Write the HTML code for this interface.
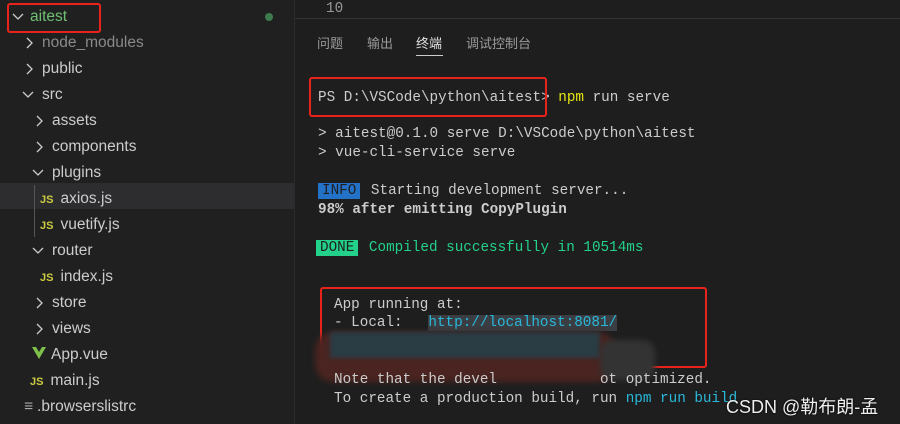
<!DOCTYPE html>
<html><head><style>
body{margin:0;width:900px;height:424px;background:#1e1e1e;overflow:hidden;position:relative;font-family:"Liberation Sans","Noto Sans CJK SC",sans-serif}
#side{position:absolute;left:0;top:0;width:294px;height:424px;background:#202020;border-right:1px solid #2b2b2b}
.r{position:absolute;height:26px;line-height:26px;font-size:15.5px;color:#ccc;white-space:nowrap}
.ch{display:inline-block;width:18px;height:26px;vertical-align:top}
.ch svg{margin-top:7px}
.js{color:#cbcb41;font-weight:bold;font-size:11px;margin-right:7px}
.m{font-family:"Liberation Mono",monospace;font-size:14.3px;color:#ccc;position:absolute;white-space:pre;line-height:19px}
.rb{position:absolute;border:2px solid #e8231c;border-radius:3px}
.bd{padding:0 4px;color:#1e1e1e;margin-right:2px}
</style></head><body>
<div id="side">
<div style="position:absolute;left:0;top:183px;width:294px;height:26px;background:#2d2d2f"></div>
<div style="position:absolute;left:34px;top:185px;width:1px;height:52px;background:#555"></div>
<div class="r" style="left:12px;top:4px;color:#6fbf73"><span class="ch"><svg width="12" height="12"><path d="M1 3l5 5 5-5" stroke="#ccc" fill="none" stroke-width="1.3"/></svg></span>aitest</div>
<div style="position:absolute;left:265px;top:13px;width:8px;height:8px;border-radius:50%;background:#3d7a4e"></div>
<div class="r" style="left:24px;top:30px;color:#8a8a8a"><span class="ch"><svg width="12" height="12"><path d="M3 1l5 5-5 5" stroke="#ccc" fill="none" stroke-width="1.3"/></svg></span>node_modules</div>
<div class="r" style="left:24px;top:56px"><span class="ch"><svg width="12" height="12"><path d="M3 1l5 5-5 5" stroke="#ccc" fill="none" stroke-width="1.3"/></svg></span>public</div>
<div class="r" style="left:22px;top:82px"><span class="ch" style="width:20px"><svg width="12" height="12"><path d="M1 3l5 5 5-5" stroke="#ccc" fill="none" stroke-width="1.3"/></svg></span>src</div>
<div class="r" style="left:34px;top:108px"><span class="ch"><svg width="12" height="12"><path d="M3 1l5 5-5 5" stroke="#ccc" fill="none" stroke-width="1.3"/></svg></span>assets</div>
<div class="r" style="left:34px;top:134px"><span class="ch"><svg width="12" height="12"><path d="M3 1l5 5-5 5" stroke="#ccc" fill="none" stroke-width="1.3"/></svg></span>components</div>
<div class="r" style="left:32px;top:160px"><span class="ch" style="width:20px"><svg width="12" height="12"><path d="M1 3l5 5 5-5" stroke="#ccc" fill="none" stroke-width="1.3"/></svg></span>plugins</div>
<div class="r" style="left:40px;top:186px"><span class="js">JS</span>axios.js</div>
<div class="r" style="left:40px;top:212px"><span class="js">JS</span>vuetify.js</div>
<div class="r" style="left:32px;top:238px"><span class="ch" style="width:20px"><svg width="12" height="12"><path d="M1 3l5 5 5-5" stroke="#ccc" fill="none" stroke-width="1.3"/></svg></span>router</div>
<div class="r" style="left:40px;top:264px"><span class="js">JS</span>index.js</div>
<div class="r" style="left:34px;top:290px"><span class="ch"><svg width="12" height="12"><path d="M3 1l5 5-5 5" stroke="#ccc" fill="none" stroke-width="1.3"/></svg></span>store</div>
<div class="r" style="left:34px;top:316px"><span class="ch"><svg width="12" height="12"><path d="M3 1l5 5-5 5" stroke="#ccc" fill="none" stroke-width="1.3"/></svg></span>views</div>
<div class="r" style="left:32px;top:342px"><svg width="14" height="12" style="margin-right:5px"><path d="M0 0h4l3 5 3-5h4l-7 12z" fill="#7ec04b"/></svg>App.vue</div>
<div class="r" style="left:30px;top:368px"><span class="js">JS</span>main.js</div>
<div class="r" style="left:24px;top:394px"><span style="color:#aaa;margin-right:4px">≡</span>.browserslistrc</div>
<div class="rb" style="left:7px;top:3px;width:90px;height:26px"></div>
</div>
<div style="position:absolute;left:295px;top:18px;width:605px;height:1px;background:#333"></div>
<div class="m" style="left:326px;top:0px;color:#999">10</div>
<div style="position:absolute;top:33px;left:317px;font-size:13px;color:#9a9a9a">问题</div>
<div style="position:absolute;top:33px;left:367px;font-size:13px;color:#9a9a9a">输出</div>
<div style="position:absolute;top:33px;left:416px;font-size:13px;color:#e0e0e0">终端</div>
<div style="position:absolute;top:33px;left:466px;font-size:13px;color:#9a9a9a">调试控制台</div>
<div style="position:absolute;top:55px;left:416px;width:27px;height:1px;background:#ccc"></div>
<div class="m" style="left:318px;top:89px">PS D:\VSCode\python\aitest&gt; <span style="color:#e5e510">npm</span> run serve</div>
<div class="rb" style="left:309px;top:77px;width:234px;height:36px"></div>
<div class="m" style="left:318px;top:125px">&gt; aitest@0.1.0 serve D:\VSCode\python\aitest</div>
<div class="m" style="left:318px;top:144px">&gt; vue-cli-service serve</div>
<div class="m" style="left:318px;top:182px"><span class="bd" style="background:#2472c8">INFO</span> Starting development server...</div>
<div class="m" style="left:318px;top:201px;font-weight:bold">98% after emitting CopyPlugin</div>
<div class="m" style="left:316px;top:239px;color:#23d18b"><span class="bd" style="background:#23d18b">DONE</span> Compiled successfully in 10514ms</div>
<div class="rb" style="left:320px;top:287px;width:383px;height:77px"></div>
<div class="m" style="left:334px;top:296px">App running at:</div>
<div class="m" style="left:334px;top:314px">- Local:   <span style="color:#29b8db;background:#3a3d41">http://localhost:8081/</span></div>
<div style="position:absolute;left:315px;top:332px;width:300px;height:50px;background:#4a2420;border-radius:18px;filter:blur(3px)"></div>
<div style="position:absolute;left:330px;top:332px;width:270px;height:26px;background:#2a3c44;filter:blur(2px)"></div>
<div style="position:absolute;left:600px;top:340px;width:55px;height:40px;background:#333;border-radius:12px;filter:blur(3px)"></div>
<div class="m" style="left:334px;top:371px">Note that the devel            ot optimized.</div>
<div class="m" style="left:334px;top:390px">To create a production build, run <span style="color:#29b8db">npm run build</span></div>
<div style="position:absolute;left:726px;top:393px;font-size:18px;color:#eee;text-shadow:0 0 2px #000">CSDN @勒布朗-孟</div>
</body></html>
